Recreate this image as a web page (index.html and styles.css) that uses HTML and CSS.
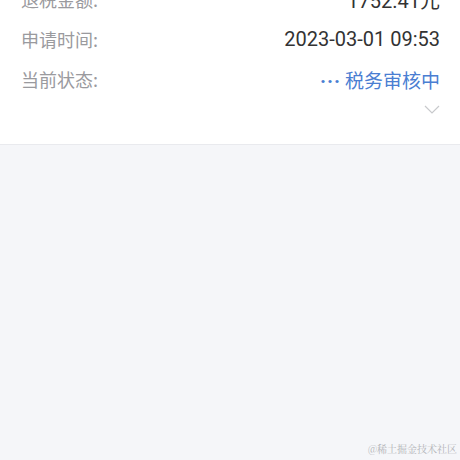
FILE: index.html
```html
<!DOCTYPE html>
<html lang="zh-CN">
<head>
  <meta charset="UTF-8">
  <meta name="viewport" content="width=device-width, initial-scale=1.0">
  <title>退税详情</title>
  <link rel="stylesheet" href="styles.css">
</head>
<body>

  <div class="card">
    <div class="row">
      <span class="label">退税金额:</span>
      <span class="value">1752.41元</span>
    </div>
    <div class="row">
      <span class="label">申请时间:</span>
      <span class="value">2023-03-01 09:53</span>
    </div>
    <div class="row">
      <span class="label">当前状态:</span>
      <span class="value status"><span class="dots">···</span>税务审核中</span>
    </div>
    <div class="more">
      <svg width="16" height="9" viewBox="0 0 16 9">
        <polyline points="1,1 8,8 15,1" fill="none" stroke="#c8c9cc" stroke-width="1.2"/>
      </svg>
    </div>
  </div>

  <div class="watermark">@稀土掘金技术社区</div>

</body>
</html>
```

FILE: styles.css
```css
body {
  margin: 0;
  height: 100vh;
  background-color: #f5f6f9;
  font-family: "Noto Sans CJK SC", "Noto Sans", sans-serif;
}
.card {
  background-color: #ffffff;
  margin-top: -21px;
  padding: 0 20px 25px 21px;
  border-bottom: 1px solid #e9eaee;
}
.row {
  display: flex;
  justify-content: space-between;
  align-items: center;
  height: 40px;
}
.label {
  font-size: 18px;
  color: #9a9a9e;
}
.value {
  font-family: "Roboto", "Noto Sans CJK SC", sans-serif;
  font-size: 20px;
  color: #333333;
}
.status {
  font-family: "Noto Sans CJK SC", sans-serif;
  font-size: 19px;
  color: #4a7ed2;
}
.dots {
  font-family: "Roboto", sans-serif;
  font-size: 20px;
  font-weight: bold;
  letter-spacing: 1px;
  margin-right: 4px;
}
.more {
  display: flex;
  justify-content: flex-end;
  height: 20px;
  align-items: center;
}
.watermark {
  position: absolute;
  right: 3px;
  bottom: 4px;
  font-family: "Noto Serif CJK SC", serif;
  font-size: 10px;
  color: #b3b4b8;
}
```
